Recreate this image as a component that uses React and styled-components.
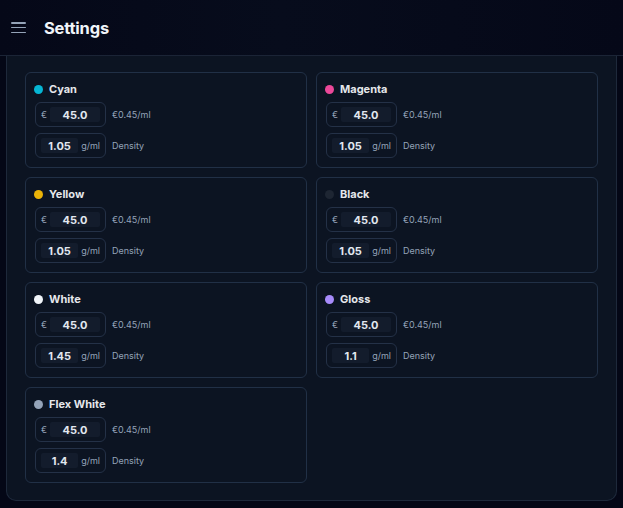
import React from "react";
import styled, { createGlobalStyle } from "styled-components";

const Global = createGlobalStyle`
  html, body { margin: 0; padding: 0; background: #040716; }
  body { font-family: Inter, "Noto Sans", sans-serif; color: #e5e7eb; }
  * { box-sizing: border-box; }
`;

const Page = styled.div`
  width: 623px;
  height: 508px;
  overflow: hidden;
  background: #040716;
  display: flex;
  flex-direction: column;
`;

const Header = styled.header`
  height: 56px;
  flex-shrink: 0;
  display: flex;
  align-items: center;
  gap: 18px;
  padding: 0 11px;
  background: linear-gradient(90deg, #050818 0%, #070c1c 45%, #050818 100%);
  border-bottom: 1px solid #1b2436;
`;

const Burger = styled.button`
  width: 15px;
  height: 11px;
  padding: 0;
  border: 0;
  background: transparent;
  display: flex;
  flex-direction: column;
  justify-content: space-between;
  span {
    display: block;
    height: 1.5px;
    background: #94a3b8;
    border-radius: 1px;
  }
`;

const Title = styled.h1`
  margin: 0;
  font-size: 16.5px;
  font-weight: 700;
  color: #f1f5f9;
  letter-spacing: -0.2px;
`;

const Panel = styled.section`
  margin: 0 6px;
  background: #0c1422;
  border: 1px solid #1e293b;
  border-top: 0;
  border-radius: 0 0 10px 10px;
  padding: 16px 18px 17px;
  display: grid;
  grid-template-columns: 1fr 1fr;
  gap: 9px;
`;

const Card = styled.div`
  border: 1px solid #213046;
  border-radius: 6px;
  padding: 10px 9px 8px;
  display: flex;
  flex-direction: column;
  height: 96px;
`;

const CardTitle = styled.div`
  display: flex;
  align-items: center;
  gap: 6px;
  height: 12px;
  margin-bottom: 7px;
  font-size: 11px;
  font-weight: 700;
  color: #e5e7eb;
`;

const Dot = styled.span`
  width: 9px;
  height: 9px;
  margin-left: -1px;
  border-radius: 50%;
  background: ${(p) => p.$color};
`;

const Row = styled.div`
  display: flex;
  align-items: center;
  gap: 6px;
  & + & { margin-top: 6px; }
`;

const Box = styled.div`
  width: 71px;
  height: 25px;
  border: 1px solid #243147;
  border-radius: 6px;
  display: flex;
  align-items: center;
  padding: 0 5px;
  gap: 3px;
`;

const Affix = styled.span`
  font-size: 9px;
  color: #94a3b8;
`;

const Field = styled.span`
  flex: 1;
  height: 15px;
  background: #131c2c;
  border-radius: 2px;
  display: flex;
  align-items: center;
  justify-content: center;
  font-size: 11px;
  font-weight: 700;
  color: #e2e8f0;
`;

const Label = styled.span`
  font-size: 9px;
  color: #94a3b8;
`;

const inks = [
  { name: "Cyan", color: "#06b6d4", density: "1.05" },
  { name: "Magenta", color: "#ec4899", density: "1.05" },
  { name: "Yellow", color: "#eab308", density: "1.05" },
  { name: "Black", color: "#1e2633", density: "1.05" },
  { name: "White", color: "#f1f5f9", density: "1.45" },
  { name: "Gloss", color: "#a78bfa", density: "1.1" },
  { name: "Flex White", color: "#94a3b8", density: "1.4" },
];

export default function App() {
  return (
    <Page>
      <Global />
      <Header>
        <Burger aria-label="menu">
          <span />
          <span />
          <span />
        </Burger>
        <Title>Settings</Title>
      </Header>
      <Panel>
        {inks.map((ink) => (
          <Card key={ink.name}>
            <CardTitle>
              <Dot $color={ink.color} />
              {ink.name}
            </CardTitle>
            <Row>
              <Box>
                <Affix>€</Affix>
                <Field>45.0</Field>
              </Box>
              <Label>€0.45/ml</Label>
            </Row>
            <Row>
              <Box>
                <Field>{ink.density}</Field>
                <Affix>g/ml</Affix>
              </Box>
              <Label>Density</Label>
            </Row>
          </Card>
        ))}
      </Panel>
    </Page>
  );
}
